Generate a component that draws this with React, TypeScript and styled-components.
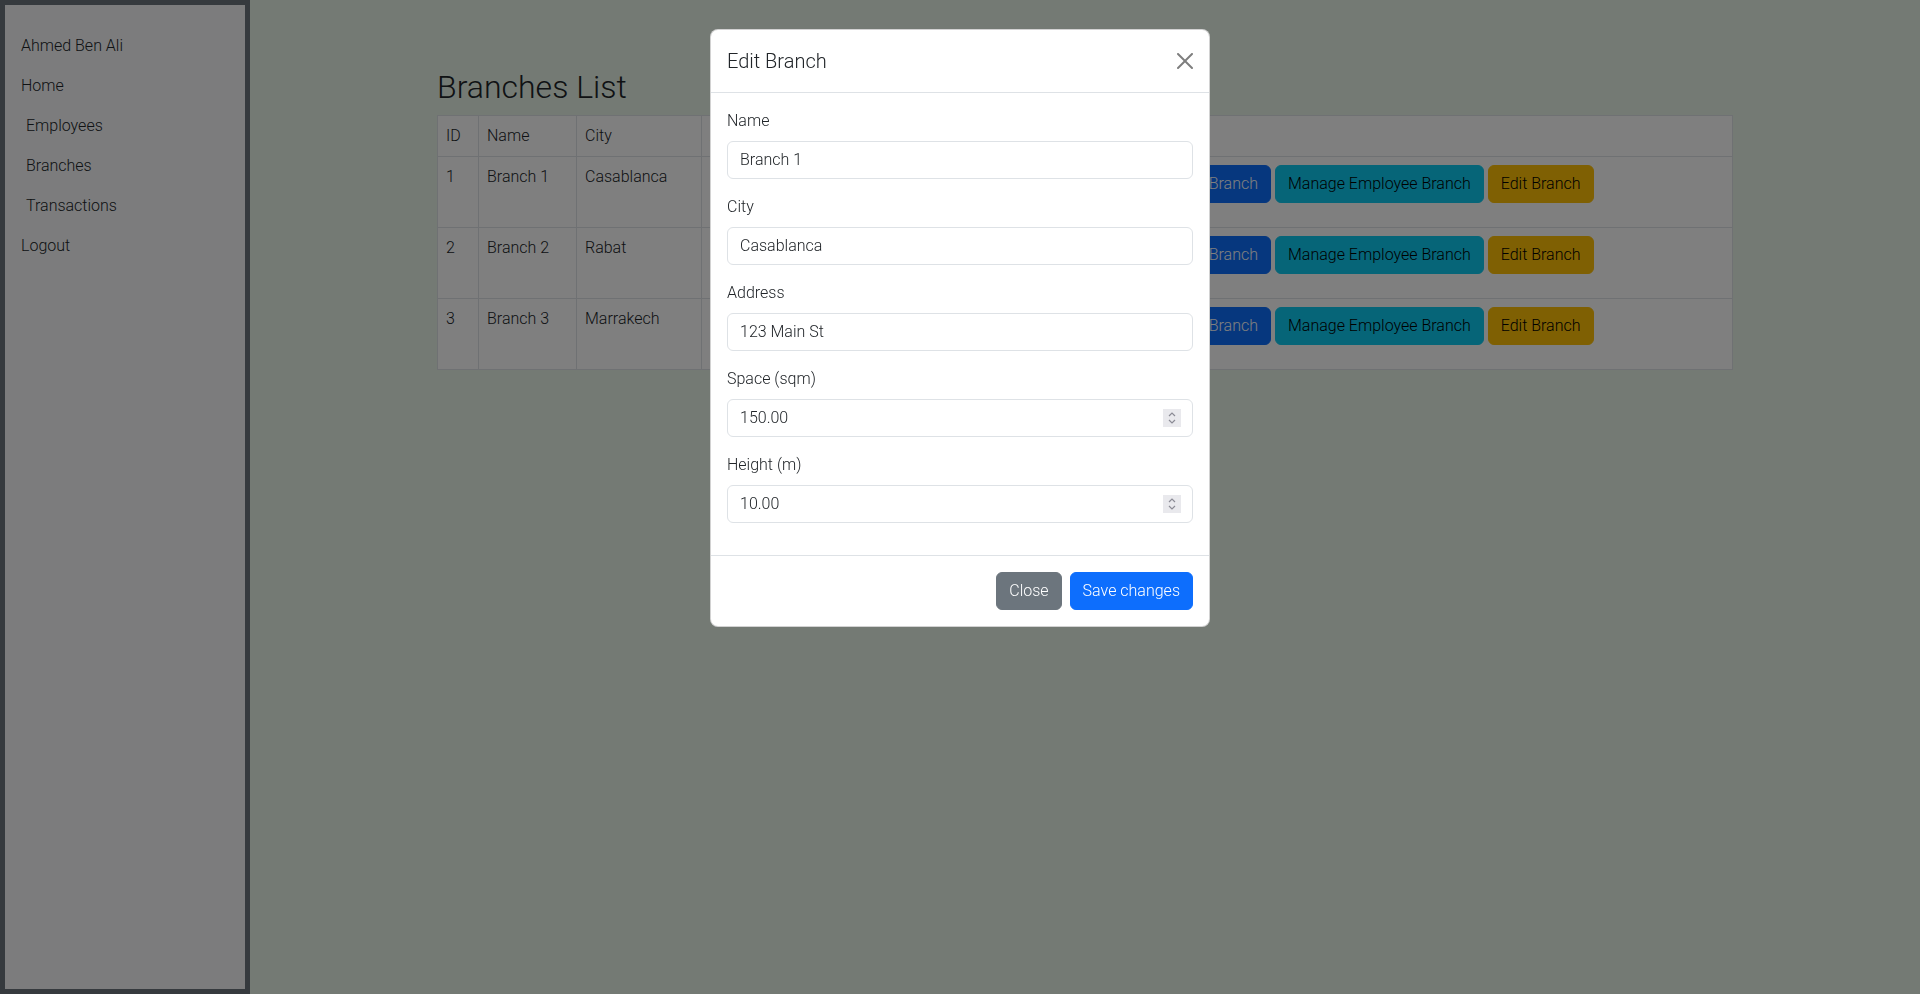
import React from 'react';
import styled, { createGlobalStyle } from 'styled-components';

const branches = [
  { id: 1, name: 'Branch 1', city: 'Casablanca', address: '123 Main St', space: '150.00', height: '10.00' },
  { id: 2, name: 'Branch 2', city: 'Rabat', address: '456 Avenue Mohammed V', space: '200.00', height: '12.00' },
  { id: 3, name: 'Branch 3', city: 'Marrakech', address: '789 Rue Yougoslavie', space: '120.00', height: '8.00' },
];

const GlobalStyle = createGlobalStyle`
  * { box-sizing: border-box; }
  html, body { margin: 0; padding: 0; }
  body {
    font-family: Roboto, "Liberation Sans", Arial, sans-serif;
    font-size: 16px;
    font-weight: 300;
    line-height: 1.5;
    color: #212529;
    background: #e8f5e9;
  }
`;

const Layout = styled.div`
  display: flex;
  min-height: 100vh;
`;

const Sidebar = styled.aside`
  width: 250px;
  flex-shrink: 0;
  height: 100vh;
  background: #f8f9fa;
  border: 5px solid #6c757d;
  padding-top: 21px;
`;

const NavItem = styled.a<{ $indent?: boolean }>`
  display: block;
  padding: 8px 16px 8px ${(p) => (p.$indent ? 21 : 16)}px;
  color: #212529;
  text-decoration: none;
`;

const Main = styled.main`
  flex: 1;
  background: #e8f5e9;
`;

const Container = styled.div`
  max-width: 1320px;
  margin: 0 auto;
  padding: 68px 12px 0;
`;

const Title = styled.h2`
  font-size: 32px;
  font-weight: 300;
  line-height: 1.2;
  margin: 0 0 9px;
`;

const Table = styled.table`
  width: 100%;
  border-collapse: collapse;
  table-layout: fixed;
  background: #fff;

  th,
  td {
    border: 1px solid #dee2e6;
    padding: 8px;
    text-align: left;
    vertical-align: top;
    font-weight: 300;
  }
`;

const ActionGroup = styled.div`
  display: flex;
  gap: 4px;
  margin-bottom: 16px;
  white-space: nowrap;
`;

const variants = {
  primary: { bg: '#0d6efd', fg: '#fff' },
  secondary: { bg: '#6c757d', fg: '#fff' },
  info: { bg: '#0dcaf0', fg: '#000' },
  warning: { bg: '#ffc107', fg: '#000' },
};

const Button = styled.button<{ $variant: keyof typeof variants }>`
  display: inline-block;
  padding: 6px 12px;
  font-family: inherit;
  font-size: 16px;
  font-weight: 300;
  line-height: 1.5;
  border-radius: 6px;
  border: 1px solid ${(p) => variants[p.$variant].bg};
  background: ${(p) => variants[p.$variant].bg};
  color: ${(p) => variants[p.$variant].fg};
  cursor: pointer;
`;

const Backdrop = styled.div`
  position: fixed;
  inset: 0;
  background: rgba(0, 0, 0, 0.5);
  z-index: 1040;
`;

const ModalWrap = styled.div`
  position: fixed;
  inset: 0;
  z-index: 1050;
  display: flex;
  justify-content: center;
  align-items: flex-start;
  padding-top: 29px;
`;

const ModalContent = styled.div`
  width: 500px;
  background: #fff;
  border: 1px solid rgba(0, 0, 0, 0.175);
  border-radius: 8px;
`;

const ModalHeader = styled.div`
  display: flex;
  align-items: center;
  padding: 16px;
  border-bottom: 1px solid #dee2e6;
`;

const ModalTitle = styled.h5`
  margin: 0;
  font-size: 20px;
  font-weight: 300;
  line-height: 1.5;
`;

const CloseX = styled.button`
  width: 24px;
  height: 24px;
  padding: 4px;
  margin: -8px -4px -8px auto;
  border: 0;
  background: none;
  opacity: 0.5;
  display: flex;
  cursor: pointer;
`;

const ModalBody = styled.div`
  padding: 16px;
`;

const Field = styled.div`
  margin-bottom: 16px;
`;

const Label = styled.label`
  display: block;
  margin-bottom: 8px;
`;

const InputWrap = styled.div`
  position: relative;
`;

const Input = styled.input`
  display: block;
  width: 100%;
  padding: 6px 12px;
  font-family: inherit;
  font-size: 16px;
  font-weight: 300;
  line-height: 1.5;
  color: #212529;
  background: #fff;
  border: 1px solid #dee2e6;
  border-radius: 6px;
  outline: none;
`;

const Spinner = styled.span`
  position: absolute;
  right: 12px;
  top: 50%;
  transform: translateY(-50%);
  width: 18px;
  height: 18px;
  background: #e9e9ed;
  display: flex;
  align-items: center;
  justify-content: center;
`;

const ModalFooter = styled.div`
  display: flex;
  justify-content: flex-end;
  align-items: center;
  padding: 12px;
  border-top: 1px solid #dee2e6;

  & > button {
    margin: 4px;
  }
`;

const fields = [
  { label: 'Name', value: 'Branch 1' },
  { label: 'City', value: 'Casablanca' },
  { label: 'Address', value: '123 Main St' },
  { label: 'Space (sqm)', value: '150.00', number: true },
  { label: 'Height (m)', value: '10.00', number: true },
];

function SpinIcon() {
  return (
    <svg width="10" height="14" viewBox="0 0 10 14" fill="none" stroke="#8b8b95" strokeWidth="1.2">
      <path d="M2 5 L5 2 L8 5" />
      <path d="M2 9 L5 12 L8 9" />
    </svg>
  );
}

export default function App() {
  return (
    <>
      <GlobalStyle />
      <Layout>
        <Sidebar>
          <NavItem>Ahmed Ben Ali</NavItem>
          <NavItem>Home</NavItem>
          <NavItem $indent>Employees</NavItem>
          <NavItem $indent>Branches</NavItem>
          <NavItem $indent>Transactions</NavItem>
          <NavItem>Logout</NavItem>
        </Sidebar>
        <Main>
          <Container>
            <Title>Branches List</Title>
            <Table>
              <colgroup>
                <col style={{ width: 41 }} />
                <col style={{ width: 98 }} />
                <col style={{ width: 125 }} />
                <col style={{ width: 180 }} />
                <col style={{ width: 133 }} />
                <col style={{ width: 135 }} />
                <col />
              </colgroup>
              <thead>
                <tr>
                  <th>ID</th>
                  <th>Name</th>
                  <th>City</th>
                  <th>Address</th>
                  <th>Space</th>
                  <th>Height</th>
                  <th></th>
                </tr>
              </thead>
              <tbody>
                {branches.map((b) => (
                  <tr key={b.id}>
                    <td>{b.id}</td>
                    <td>{b.name}</td>
                    <td>{b.city}</td>
                    <td>{b.address}</td>
                    <td>{b.space}</td>
                    <td>{b.height}</td>
                    <td>
                      <ActionGroup>
                        <Button $variant="primary">View Branch</Button>
                        <Button $variant="info">Manage Employee Branch</Button>
                        <Button $variant="warning">Edit Branch</Button>
                      </ActionGroup>
                    </td>
                  </tr>
                ))}
              </tbody>
            </Table>
          </Container>
        </Main>
      </Layout>

      <Backdrop />
      <ModalWrap>
        <ModalContent>
          <ModalHeader>
            <ModalTitle>Edit Branch</ModalTitle>
            <CloseX aria-label="Close">
              <svg width="16" height="16" viewBox="0 0 16 16" fill="#000">
                <path d="M.293.293a1 1 0 0 1 1.414 0L8 6.586 14.293.293a1 1 0 1 1 1.414 1.414L9.414 8l6.293 6.293a1 1 0 0 1-1.414 1.414L8 9.414l-6.293 6.293a1 1 0 0 1-1.414-1.414L6.586 8 .293 1.707a1 1 0 0 1 0-1.414z" />
              </svg>
            </CloseX>
          </ModalHeader>
          <ModalBody>
            {fields.map((f) => (
              <Field key={f.label}>
                <Label>{f.label}</Label>
                <InputWrap>
                  <Input type="text" defaultValue={f.value} />
                  {f.number && (
                    <Spinner>
                      <SpinIcon />
                    </Spinner>
                  )}
                </InputWrap>
              </Field>
            ))}
          </ModalBody>
          <ModalFooter>
            <Button $variant="secondary">Close</Button>
            <Button $variant="primary">Save changes</Button>
          </ModalFooter>
        </ModalContent>
      </ModalWrap>
    </>
  );
}
